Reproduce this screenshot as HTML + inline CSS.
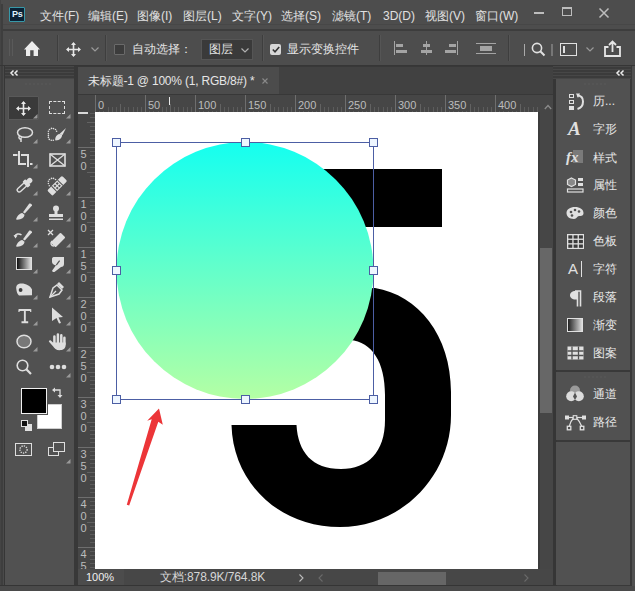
<!DOCTYPE html><html><head><meta charset="utf-8"><style>
*{margin:0;padding:0;box-sizing:border-box}
html,body{width:635px;height:591px;overflow:hidden;background:#3a3a3a;font-family:"Liberation Sans",sans-serif;color:#d8d8d8;font-size:12px}
div,svg,span{position:absolute}
.t{white-space:nowrap;line-height:14px;font-size:12px;color:#e3e3e3}
.ic{overflow:visible}
</style></head><body>
<div style="left:0;top:0;width:635px;height:591px;background:#3a3a3a"></div>
<div style="left:0;top:0;width:635px;height:30px;background:#4d4d4d"></div>
<div style="left:0;top:24px;width:635px;height:1px;background:#474747"></div>
<div style="left:0;top:29px;width:635px;height:2px;background:#3d3d3d"></div>
<div style="left:0;top:0;width:1px;height:591px;background:#444"></div>
<div style="left:1px;top:4px;width:2px;height:587px;background:#3e3e3e"></div>
<div style="left:9px;top:7px;width:16px;height:15px;background:#0b2135;border:1px solid #3898a8;border-radius:1px"></div>
<div class="t" style="left:12px;top:9px;font-size:9px;line-height:11px;color:#dff2ff;font-weight:bold;letter-spacing:-0.3px">Ps</div>
<div class="t" style="left:40px;top:9px;color:#e0e0e0">文件(F)</div>
<div class="t" style="left:88px;top:9px;color:#e0e0e0">编辑(E)</div>
<div class="t" style="left:137px;top:9px;color:#e0e0e0">图像(I)</div>
<div class="t" style="left:183px;top:9px;color:#e0e0e0">图层(L)</div>
<div class="t" style="left:232px;top:9px;color:#e0e0e0">文字(Y)</div>
<div class="t" style="left:281px;top:9px;color:#e0e0e0">选择(S)</div>
<div class="t" style="left:332px;top:9px;color:#e0e0e0">滤镜(T)</div>
<div class="t" style="left:383px;top:9px;color:#e0e0e0">3D(D)</div>
<div class="t" style="left:425px;top:9px;color:#e0e0e0">视图(V)</div>
<div class="t" style="left:475px;top:9px;color:#e0e0e0">窗口(W)</div>
<div style="left:534px;top:12px;width:10px;height:2px;background:#bdbdbd"></div>
<div style="left:562px;top:7px;width:10px;height:9px;border:1px solid #bdbdbd;border-top-width:2px"></div>
<svg class="ic" style="left:599px;top:8px" width="10" height="10"><path d="M0.5 0.5L9.5 9.5M9.5 0.5L0.5 9.5" stroke="#bdbdbd" stroke-width="1.5"/></svg>
<div style="left:3px;top:31px;width:632px;height:34px;background:#4d4d4d"></div>
<div style="left:0;top:65px;width:635px;height:1px;background:#363636"></div>
<div style="left:9px;top:39px;width:1px;height:17px;background:#5a5a5a"></div>
<div style="left:12px;top:39px;width:1px;height:17px;background:#5a5a5a"></div>
<svg class="ic" style="left:20px;top:36px" width="24" height="24"><path d="M12 5L4 13.5H6V20H10.2V14.2H13.6V20H18V13.5H20Z" fill="#ececec"/></svg>
<div style="left:57px;top:35px;width:1px;height:26px;background:#3e3e3e"></div>
<div style="left:58px;top:35px;width:1px;height:26px;background:#555"></div>
<div style="left:105px;top:35px;width:1px;height:26px;background:#3e3e3e"></div>
<div style="left:106px;top:35px;width:1px;height:26px;background:#555"></div>
<div style="left:262px;top:35px;width:1px;height:26px;background:#3e3e3e"></div>
<div style="left:263px;top:35px;width:1px;height:26px;background:#555"></div>
<div style="left:379px;top:35px;width:1px;height:26px;background:#3e3e3e"></div>
<div style="left:380px;top:35px;width:1px;height:26px;background:#555"></div>
<div style="left:508px;top:35px;width:1px;height:26px;background:#3e3e3e"></div>
<div style="left:509px;top:35px;width:1px;height:26px;background:#555"></div>
<svg class="ic" style="left:66px;top:42px" width="15" height="15" viewBox="0 0 15 15"><path d="M7.5 1V14M1 7.5H14" stroke="#e6e6e6" stroke-width="1.6"/><path d="M7.5 0L10 3H5ZM7.5 15L10 12H5ZM0 7.5L3 5V10ZM15 7.5L12 5V10Z" fill="#e6e6e6"/></svg>
<svg class="ic" style="left:91px;top:47px" width="8" height="5"><path d="M0.5 0.5L4 4L7.5 0.5" stroke="#9a9a9a" fill="none" stroke-width="1.2"/></svg>
<div style="left:114px;top:44px;width:11px;height:11px;border:1px solid #6a6a6a;background:#3c3c3c;border-radius:1px"></div>
<div class="t" style="left:132px;top:42px">自动选择：</div>
<div style="left:201px;top:39px;width:52px;height:21px;background:#3a3a3a;border:1px solid #555"></div>
<div class="t" style="left:209px;top:42px">图层</div>
<svg class="ic" style="left:241px;top:48px" width="8" height="5"><path d="M0.5 0.5L4 4L7.5 0.5" stroke="#b0b0b0" fill="none" stroke-width="1.2"/></svg>
<div style="left:270px;top:44px;width:11px;height:11px;background:#d6d6d6;border-radius:2px"></div>
<svg class="ic" style="left:272px;top:46px" width="8" height="7"><path d="M0.8 3.5L3 5.8L7.2 1" stroke="#333" fill="none" stroke-width="1.6"/></svg>
<div class="t" style="left:287px;top:42px">显示变换控件</div>
<div style="left:394px;top:41px;width:1px;height:14px;background:#a4a4a4"></div><div style="left:396px;top:44px;width:7px;height:3px;background:#a4a4a4"></div><div style="left:396px;top:50px;width:11px;height:3px;background:#a4a4a4"></div>
<div style="left:426px;top:41px;width:1px;height:14px;background:#a4a4a4"></div><div style="left:423px;top:44px;width:7px;height:3px;background:#a4a4a4"></div><div style="left:421px;top:50px;width:11px;height:3px;background:#a4a4a4"></div>
<div style="left:457px;top:41px;width:1px;height:14px;background:#a4a4a4"></div><div style="left:449px;top:44px;width:7px;height:3px;background:#a4a4a4"></div><div style="left:445px;top:50px;width:11px;height:3px;background:#a4a4a4"></div>
<div style="left:476px;top:43px;width:20px;height:1px;background:#a4a4a4"></div><div style="left:476px;top:53px;width:20px;height:1px;background:#a4a4a4"></div><div style="left:480px;top:46px;width:12px;height:5px;background:#a4a4a4"></div>
<div style="left:524px;top:44px;width:1px;height:12px;background:#aaa"></div>
<svg class="ic" style="left:531px;top:42px" width="15" height="15"><circle cx="6" cy="6" r="4.6" stroke="#e0e0e0" stroke-width="1.6" fill="none"/><path d="M9.3 9.3L13.5 13.5" stroke="#e0e0e0" stroke-width="2"/></svg>
<div style="left:551px;top:44px;width:2px;height:12px;background:#777"></div>
<div style="left:560px;top:43px;width:17px;height:13px;border:1.5px solid #e0e0e0"></div>
<div style="left:563px;top:46px;width:2px;height:7px;background:#e0e0e0"></div>
<svg class="ic" style="left:586px;top:47px" width="8" height="5"><path d="M0.5 0.5L4 4L7.5 0.5" stroke="#9a9a9a" fill="none" stroke-width="1.2"/></svg>
<svg class="ic" style="left:604px;top:40px" width="17" height="17"><path d="M4.5 7H1V16H16V7H12.5" stroke="#e6e6e6" stroke-width="1.8" fill="none"/><path d="M8.5 12V2M5 5L8.5 1.5L12 5" stroke="#e6e6e6" stroke-width="1.8" fill="none"/></svg>
<div style="left:3px;top:66px;width:1px;height:520px;background:#4a4a4a"></div>
<div style="left:4px;top:66px;width:1px;height:520px;background:#363636"></div>
<div style="left:5px;top:66px;width:69px;height:520px;background:#515151"></div>
<div style="left:5px;top:66px;width:69px;height:13px;background:#3b3b3b"></div>
<div style="left:5px;top:66px;width:69px;height:1px;background:#474747"></div>
<div style="left:5px;top:69px;width:69px;height:1px;background:#474747"></div>
<div style="left:5px;top:72px;width:69px;height:1px;background:#474747"></div>
<div style="left:5px;top:75px;width:69px;height:1px;background:#474747"></div>
<div style="left:5px;top:78px;width:69px;height:1px;background:#474747"></div>
<svg class="ic" style="left:10px;top:70px" width="9" height="6"><path d="M3.5 0.5L1 3L3.5 5.5M7.5 0.5L5 3L7.5 5.5" stroke="#eeeeee" stroke-width="1.5" fill="none"/></svg>
<div style="left:25px;top:83px;width:28px;height:2px;background:repeating-linear-gradient(90deg,#555 0 2px,transparent 2px 4px)"></div>
<div style="left:8px;top:96px;width:31px;height:24px;background:#3a3a3a;border:1px solid #595959;border-radius:1px"></div>
<svg class="ic" style="left:16px;top:101px" width="15" height="15" viewBox="0 0 15 15"><path d="M7.5 1V14M1 7.5H14" stroke="#e8e8e8" stroke-width="1.6"/><path d="M7.5 0L10 3H5ZM7.5 15L10 12H5ZM0 7.5L3 5V10ZM15 7.5L12 5V10Z" fill="#e8e8e8"/></svg>
<svg class="ic" style="left:33px;top:114px" width="5" height="5"><path d="M4.5 0V4.5H0Z" fill="#9a9a9a"/></svg>
<div style="left:49px;top:101px;width:16px;height:13px;border:1.5px dashed #dedede"></div>
<svg class="ic" style="left:66px;top:114px" width="5" height="5"><path d="M4.5 0V4.5H0Z" fill="#9a9a9a"/></svg>
<svg class="ic" style="left:16px;top:127px" width="18" height="16"><ellipse cx="9" cy="5.5" rx="7.5" ry="4.8" stroke="#dedede" stroke-width="1.5" fill="none"/><path d="M3.5 9C2 11 4 13 5 11.5L5 15" stroke="#dedede" stroke-width="1.5" fill="none"/></svg>
<svg class="ic" style="left:33px;top:139px" width="5" height="5"><path d="M4.5 0V4.5H0Z" fill="#9a9a9a"/></svg>
<svg class="ic" style="left:44px;top:122px" width="24" height="22"><circle cx="5.5" cy="7.5" r="0.8" fill="#dedede"/><circle cx="7.5" cy="6.4" r="0.8" fill="#dedede"/><circle cx="9.5" cy="6.6" r="0.8" fill="#dedede"/><circle cx="11.5" cy="7.5" r="0.8" fill="#dedede"/><circle cx="12.6" cy="9.3" r="0.8" fill="#dedede"/><circle cx="4.4" cy="9.3" r="0.8" fill="#dedede"/><circle cx="4.4" cy="11.5" r="0.8" fill="#dedede"/><circle cx="4.4" cy="13.4" r="0.8" fill="#dedede"/><circle cx="4.4" cy="15.4" r="0.8" fill="#dedede"/><circle cx="5.3" cy="17.4" r="0.8" fill="#dedede"/><circle cx="7.3" cy="18.3" r="0.8" fill="#dedede"/><circle cx="9.3" cy="18.3" r="0.8" fill="#dedede"/><path d="M11.5 18.5C10.5 17 12 13 15 12L18 12.5C18.5 15 16 18.5 11.5 18.5Z" fill="#dedede"/><path d="M15.5 12L22 6L18.5 13Z" fill="#dedede"/></svg>
<svg class="ic" style="left:66px;top:139px" width="5" height="5"><path d="M4.5 0V4.5H0Z" fill="#9a9a9a"/></svg>
<svg class="ic" style="left:12px;top:150px" width="22" height="18"><path d="M1 5H5.5M7 1V14H14M9 5H16V17M18 14H20.5" stroke="#dedede" stroke-width="2" fill="none"/></svg>
<svg class="ic" style="left:33px;top:164px" width="5" height="5"><path d="M4.5 0V4.5H0Z" fill="#9a9a9a"/></svg>
<svg class="ic" style="left:49px;top:153px" width="17" height="14"><rect x="1" y="1" width="15" height="12" stroke="#dedede" stroke-width="1.6" fill="none"/><path d="M1 1L16 13M16 1L1 13" stroke="#dedede" stroke-width="1.3"/></svg>
<svg class="ic" style="left:12px;top:174px" width="22" height="22"><g transform="translate(5.2 17.8) rotate(-42)"><rect x="0.7" y="-2" width="11" height="4" rx="2" stroke="#dedede" stroke-width="1.4" fill="none"/><rect x="10.5" y="-4" width="4" height="8" rx="1" fill="#dedede"/><rect x="13" y="-2.6" width="6.5" height="5.2" rx="2.6" fill="#dedede"/></g></svg>
<svg class="ic" style="left:33px;top:191px" width="5" height="5"><path d="M4.5 0V4.5H0Z" fill="#9a9a9a"/></svg>
<svg class="ic" style="left:44px;top:174px" width="24" height="24"><circle cx="5.5" cy="5.5" r="0.8" fill="#dedede"/><circle cx="7.5" cy="4.4" r="0.8" fill="#dedede"/><circle cx="9.5" cy="4.4" r="0.8" fill="#dedede"/><circle cx="11.5" cy="5.5" r="0.8" fill="#dedede"/><circle cx="4.4" cy="7.3" r="0.8" fill="#dedede"/><circle cx="4.4" cy="9.5" r="0.8" fill="#dedede"/><circle cx="5.3" cy="11.7" r="0.8" fill="#dedede"/><g transform="translate(13.2 11.8) rotate(-45)"><rect x="-10.5" y="-3.8" width="21" height="7.6" rx="1.5" fill="#dedede"/><path d="M-4.3 -3.8V3.8M4.3 -3.8V3.8" stroke="#515151" stroke-width="1"/><rect x="-2.6" y="-2.6" width="2" height="2" fill="#515151"/><rect x="0.6" y="-2.6" width="2" height="2" fill="#515151"/><rect x="-2.6" y="0.6" width="2" height="2" fill="#515151"/><rect x="0.6" y="0.6" width="2" height="2" fill="#515151"/></g></svg>
<svg class="ic" style="left:66px;top:191px" width="5" height="5"><path d="M4.5 0V4.5H0Z" fill="#9a9a9a"/></svg>
<svg class="ic" style="left:12px;top:200px" width="22" height="22"><path d="M17.3 3.6C18.5 2.8 20.5 4.5 20 5.6L12.8 13.6L11 12.3Z" fill="#dedede"/><path d="M4 19.6C4.8 17 6.5 13.6 10.3 13L12.5 14.8C12.3 18 9 20 4 19.6Z" fill="#dedede"/></svg>
<svg class="ic" style="left:33px;top:217px" width="5" height="5"><path d="M4.5 0V4.5H0Z" fill="#9a9a9a"/></svg>
<svg class="ic" style="left:48px;top:205px" width="16" height="16"><circle cx="8" cy="3.5" r="3" fill="#dedede"/><rect x="6.5" y="5" width="3" height="4" fill="#dedede"/><rect x="1" y="9" width="14" height="3" fill="#dedede"/><rect x="1" y="13.5" width="14" height="1.5" fill="#dedede"/></svg>
<svg class="ic" style="left:66px;top:217px" width="5" height="5"><path d="M4.5 0V4.5H0Z" fill="#9a9a9a"/></svg>
<svg class="ic" style="left:12px;top:227px" width="22" height="22"><path d="M17.3 3.6C18.5 2.8 20.5 4.5 20 5.6L12.8 13.6L11 12.3Z" fill="#dedede"/><path d="M4 19.6C4.8 17 6.5 13.6 10.3 13L12.5 14.8C12.3 18 9 20 4 19.6Z" fill="#dedede"/><path d="M3 9.5C3.5 7 7 6 9.5 8" stroke="#dedede" stroke-width="1.5" fill="none"/><path d="M1.5 8L3.5 11.5L5.5 8.5Z" fill="#dedede"/></svg>
<svg class="ic" style="left:33px;top:243px" width="5" height="5"><path d="M4.5 0V4.5H0Z" fill="#9a9a9a"/></svg>
<svg class="ic" style="left:47px;top:229px" width="19" height="18"><path d="M1 1L6 6M6 1L1 6" stroke="#dedede" stroke-width="1.3"/><g transform="rotate(-45 11 11)"><rect x="4" y="7.5" width="14" height="7" rx="1" fill="#dedede"/></g><path d="M5 12C3 14 4 17 7 17" stroke="#dedede" stroke-width="1.4" fill="none"/></svg>
<svg class="ic" style="left:66px;top:243px" width="5" height="5"><path d="M4.5 0V4.5H0Z" fill="#9a9a9a"/></svg>
<div style="left:16px;top:257px;width:16px;height:13px;border:1.3px solid #e0e0e0;background:linear-gradient(90deg,#111,#ddd)"></div>
<svg class="ic" style="left:33px;top:269px" width="5" height="5"><path d="M4.5 0V4.5H0Z" fill="#9a9a9a"/></svg>
<svg class="ic" style="left:44px;top:252px" width="22" height="22"><path d="M8 7C8 5.5 9 5 10.5 5H20V12C20 13.8 18.8 15 17 15L10.8 19.8C9.8 20.6 7.6 19.8 8.2 18.6L12 13.2C10 13.2 8 12 8 10Z" fill="#dedede"/><path d="M12.3 13.2L15.6 8.6" stroke="#515151" stroke-width="1.2"/></svg>
<svg class="ic" style="left:66px;top:269px" width="5" height="5"><path d="M4.5 0V4.5H0Z" fill="#9a9a9a"/></svg>
<svg class="ic" style="left:12px;top:278px" width="22" height="22"><path d="M4.3 11C3.8 7.3 6 5.6 9.5 5.6C14 5.6 18.5 8 20 11.5L20 17.2L7 17.6C5.3 16 4.5 13.5 4.3 11Z" fill="#dedede"/><circle cx="8.6" cy="12" r="1.9" fill="#3a3a3a"/></svg>
<svg class="ic" style="left:33px;top:295px" width="5" height="5"><path d="M4.5 0V4.5H0Z" fill="#9a9a9a"/></svg>
<svg class="ic" style="left:48px;top:281px" width="17" height="17"><path d="M11 1L16 6L14 8L9 3Z" fill="#dedede"/><path d="M9 4L14 9L11 13L2 16L5 7Z" stroke="#dedede" stroke-width="1.5" fill="none"/><path d="M2 16L8 10" stroke="#dedede" stroke-width="1.2"/></svg>
<svg class="ic" style="left:66px;top:295px" width="5" height="5"><path d="M4.5 0V4.5H0Z" fill="#9a9a9a"/></svg>
<svg class="ic" style="left:18px;top:308px" width="14" height="16"><path d="M1 2H12.7M6.85 2V14M3.5 14.2H10.2" stroke="#dedede" stroke-width="1.9"/><path d="M1 1.2V4M12.7 1.2V4" stroke="#dedede" stroke-width="1.2"/></svg>
<svg class="ic" style="left:33px;top:321px" width="5" height="5"><path d="M4.5 0V4.5H0Z" fill="#9a9a9a"/></svg>
<svg class="ic" style="left:51px;top:307px" width="13" height="17"><path d="M1 0.5L12 10L7.5 10.5L10 16L8 16.5L5.5 11L1 14Z" fill="#dedede"/></svg>
<svg class="ic" style="left:66px;top:321px" width="5" height="5"><path d="M4.5 0V4.5H0Z" fill="#9a9a9a"/></svg>
<svg class="ic" style="left:16px;top:334px" width="16" height="15"><ellipse cx="8" cy="7.5" rx="7" ry="6.3" stroke="#dedede" stroke-width="1.5" fill="#787878"/></svg>
<svg class="ic" style="left:33px;top:347px" width="5" height="5"><path d="M4.5 0V4.5H0Z" fill="#9a9a9a"/></svg>
<svg class="ic" style="left:48px;top:332px" width="19" height="19"><path d="M6.4 11V4.6M9.9 11V2.6M13.3 11V3.2M16.4 12V5.8" stroke="#dedede" stroke-width="2.5" stroke-linecap="round"/><path d="M5 10.5H17.65V13C17.65 16.5 15 18.2 11.5 18.2C8 18.2 6.5 16.5 5 14.2L1 9.8C0.5 8.8 1.8 7.6 2.8 8.4L5 10.5Z" fill="#dedede"/></svg>
<svg class="ic" style="left:66px;top:347px" width="5" height="5"><path d="M4.5 0V4.5H0Z" fill="#9a9a9a"/></svg>
<svg class="ic" style="left:16px;top:359px" width="16" height="16"><circle cx="6.5" cy="6.5" r="5.3" stroke="#dedede" stroke-width="1.6" fill="none"/><path d="M10.3 10.3L15 15" stroke="#dedede" stroke-width="2.2"/></svg>
<svg class="ic" style="left:49px;top:364px" width="18" height="6"><circle cx="3" cy="3" r="2.3" fill="#dedede"/><circle cx="9" cy="3" r="2.3" fill="#dedede"/><circle cx="15" cy="3" r="2.3" fill="#dedede"/></svg>
<svg class="ic" style="left:66px;top:373px" width="5" height="5"><path d="M4.5 0V4.5H0Z" fill="#9a9a9a"/></svg>
<div style="left:37px;top:404px;width:25px;height:25px;background:#fff;border:1px solid #cfcfcf"></div>
<div style="left:21px;top:388px;width:26px;height:26px;background:#000;border:1.5px solid #f0f0f0;box-shadow:0 0 0 1px #515151"></div>
<svg class="ic" style="left:52px;top:387px" width="12" height="12"><path d="M2 3H8V8" stroke="#dedede" stroke-width="1.3" fill="none"/><path d="M0 3L3 0.5V5.5Z M8 11L5.5 8H10.5Z" fill="#dedede"/></svg>
<div style="left:25px;top:424px;width:7px;height:7px;background:#e0e0e0"></div>
<div style="left:21px;top:420px;width:7px;height:7px;background:#111;border:1px solid #e0e0e0"></div>
<div style="left:15px;top:443px;width:17px;height:13px;border:1.5px solid #dedede"></div>
<svg class="ic" style="left:17px;top:444px" width="13" height="11"><circle cx="6.5" cy="5.5" r="3.6" stroke="#dedede" stroke-width="1.4" stroke-dasharray="1.3 1.1" fill="none"/></svg>
<div style="left:48px;top:447px;width:11px;height:9px;border:1.3px solid #dedede"></div>
<div style="left:53px;top:442px;width:12px;height:10px;border:1.3px solid #dedede;background:#515151"></div>
<svg class="ic" style="left:66px;top:459px" width="5" height="5"><path d="M4.5 0V4.5H0Z" fill="#9a9a9a"/></svg>
<div style="left:74px;top:66px;width:4px;height:525px;background:#383838"></div>
<div style="left:78px;top:66px;width:475px;height:520px;background:#3e3e3e"></div>
<div style="left:78px;top:66px;width:475px;height:29px;background:#414141"></div>
<div style="left:78px;top:66px;width:475px;height:1px;background:#383838"></div>
<div style="left:78px;top:94px;width:475px;height:1px;background:#383838"></div>
<div style="left:78px;top:67px;width:201px;height:27px;background:#4c4c4c"></div>
<div class="t" style="left:88px;top:74px;color:#e6e6e6;letter-spacing:-0.2px">未标题-1 @ 100% (1, RGB/8#) *</div>
<svg class="ic" style="left:262px;top:78px" width="6" height="6"><path d="M0.5 0.5L5.5 5.5M5.5 0.5L0.5 5.5" stroke="#8a8a8a" stroke-width="1.1"/></svg>
<div style="left:78px;top:95px;width:460px;height:17px;background:#464646"></div>
<div style="left:95px;top:95px;width:1px;height:17px;background:#6e6e6e"></div><div style="left:99px;top:107px;width:1px;height:5px;background:#5c5c5c"></div><div style="left:103px;top:107px;width:1px;height:5px;background:#5c5c5c"></div><div style="left:108px;top:107px;width:1px;height:5px;background:#5c5c5c"></div><div style="left:112px;top:107px;width:1px;height:5px;background:#5c5c5c"></div><div style="left:116px;top:107px;width:1px;height:5px;background:#5c5c5c"></div><div style="left:120px;top:104px;width:1px;height:8px;background:#626262"></div><div style="left:124px;top:107px;width:1px;height:5px;background:#5c5c5c"></div><div style="left:128px;top:107px;width:1px;height:5px;background:#5c5c5c"></div><div style="left:133px;top:107px;width:1px;height:5px;background:#5c5c5c"></div><div style="left:137px;top:107px;width:1px;height:5px;background:#5c5c5c"></div><div style="left:141px;top:107px;width:1px;height:5px;background:#5c5c5c"></div><div style="left:145px;top:95px;width:1px;height:17px;background:#6e6e6e"></div><div style="left:149px;top:107px;width:1px;height:5px;background:#5c5c5c"></div><div style="left:153px;top:107px;width:1px;height:5px;background:#5c5c5c"></div><div style="left:158px;top:107px;width:1px;height:5px;background:#5c5c5c"></div><div style="left:162px;top:107px;width:1px;height:5px;background:#5c5c5c"></div><div style="left:166px;top:107px;width:1px;height:5px;background:#5c5c5c"></div><div style="left:170px;top:104px;width:1px;height:8px;background:#626262"></div><div style="left:174px;top:107px;width:1px;height:5px;background:#5c5c5c"></div><div style="left:178px;top:107px;width:1px;height:5px;background:#5c5c5c"></div><div style="left:183px;top:107px;width:1px;height:5px;background:#5c5c5c"></div><div style="left:187px;top:107px;width:1px;height:5px;background:#5c5c5c"></div><div style="left:191px;top:107px;width:1px;height:5px;background:#5c5c5c"></div><div style="left:195px;top:95px;width:1px;height:17px;background:#6e6e6e"></div><div style="left:199px;top:107px;width:1px;height:5px;background:#5c5c5c"></div><div style="left:203px;top:107px;width:1px;height:5px;background:#5c5c5c"></div><div style="left:208px;top:107px;width:1px;height:5px;background:#5c5c5c"></div><div style="left:212px;top:107px;width:1px;height:5px;background:#5c5c5c"></div><div style="left:216px;top:107px;width:1px;height:5px;background:#5c5c5c"></div><div style="left:220px;top:104px;width:1px;height:8px;background:#626262"></div><div style="left:224px;top:107px;width:1px;height:5px;background:#5c5c5c"></div><div style="left:228px;top:107px;width:1px;height:5px;background:#5c5c5c"></div><div style="left:233px;top:107px;width:1px;height:5px;background:#5c5c5c"></div><div style="left:237px;top:107px;width:1px;height:5px;background:#5c5c5c"></div><div style="left:241px;top:107px;width:1px;height:5px;background:#5c5c5c"></div><div style="left:245px;top:95px;width:1px;height:17px;background:#6e6e6e"></div><div style="left:249px;top:107px;width:1px;height:5px;background:#5c5c5c"></div><div style="left:253px;top:107px;width:1px;height:5px;background:#5c5c5c"></div><div style="left:258px;top:107px;width:1px;height:5px;background:#5c5c5c"></div><div style="left:262px;top:107px;width:1px;height:5px;background:#5c5c5c"></div><div style="left:266px;top:107px;width:1px;height:5px;background:#5c5c5c"></div><div style="left:270px;top:104px;width:1px;height:8px;background:#626262"></div><div style="left:274px;top:107px;width:1px;height:5px;background:#5c5c5c"></div><div style="left:278px;top:107px;width:1px;height:5px;background:#5c5c5c"></div><div style="left:283px;top:107px;width:1px;height:5px;background:#5c5c5c"></div><div style="left:287px;top:107px;width:1px;height:5px;background:#5c5c5c"></div><div style="left:291px;top:107px;width:1px;height:5px;background:#5c5c5c"></div><div style="left:295px;top:95px;width:1px;height:17px;background:#6e6e6e"></div><div style="left:299px;top:107px;width:1px;height:5px;background:#5c5c5c"></div><div style="left:303px;top:107px;width:1px;height:5px;background:#5c5c5c"></div><div style="left:308px;top:107px;width:1px;height:5px;background:#5c5c5c"></div><div style="left:312px;top:107px;width:1px;height:5px;background:#5c5c5c"></div><div style="left:316px;top:107px;width:1px;height:5px;background:#5c5c5c"></div><div style="left:320px;top:104px;width:1px;height:8px;background:#626262"></div><div style="left:324px;top:107px;width:1px;height:5px;background:#5c5c5c"></div><div style="left:328px;top:107px;width:1px;height:5px;background:#5c5c5c"></div><div style="left:333px;top:107px;width:1px;height:5px;background:#5c5c5c"></div><div style="left:337px;top:107px;width:1px;height:5px;background:#5c5c5c"></div><div style="left:341px;top:107px;width:1px;height:5px;background:#5c5c5c"></div><div style="left:345px;top:95px;width:1px;height:17px;background:#6e6e6e"></div><div style="left:349px;top:107px;width:1px;height:5px;background:#5c5c5c"></div><div style="left:353px;top:107px;width:1px;height:5px;background:#5c5c5c"></div><div style="left:358px;top:107px;width:1px;height:5px;background:#5c5c5c"></div><div style="left:362px;top:107px;width:1px;height:5px;background:#5c5c5c"></div><div style="left:366px;top:107px;width:1px;height:5px;background:#5c5c5c"></div><div style="left:370px;top:104px;width:1px;height:8px;background:#626262"></div><div style="left:374px;top:107px;width:1px;height:5px;background:#5c5c5c"></div><div style="left:378px;top:107px;width:1px;height:5px;background:#5c5c5c"></div><div style="left:383px;top:107px;width:1px;height:5px;background:#5c5c5c"></div><div style="left:387px;top:107px;width:1px;height:5px;background:#5c5c5c"></div><div style="left:391px;top:107px;width:1px;height:5px;background:#5c5c5c"></div><div style="left:395px;top:95px;width:1px;height:17px;background:#6e6e6e"></div><div style="left:399px;top:107px;width:1px;height:5px;background:#5c5c5c"></div><div style="left:403px;top:107px;width:1px;height:5px;background:#5c5c5c"></div><div style="left:408px;top:107px;width:1px;height:5px;background:#5c5c5c"></div><div style="left:412px;top:107px;width:1px;height:5px;background:#5c5c5c"></div><div style="left:416px;top:107px;width:1px;height:5px;background:#5c5c5c"></div><div style="left:420px;top:104px;width:1px;height:8px;background:#626262"></div><div style="left:424px;top:107px;width:1px;height:5px;background:#5c5c5c"></div><div style="left:428px;top:107px;width:1px;height:5px;background:#5c5c5c"></div><div style="left:433px;top:107px;width:1px;height:5px;background:#5c5c5c"></div><div style="left:437px;top:107px;width:1px;height:5px;background:#5c5c5c"></div><div style="left:441px;top:107px;width:1px;height:5px;background:#5c5c5c"></div><div style="left:445px;top:95px;width:1px;height:17px;background:#6e6e6e"></div><div style="left:449px;top:107px;width:1px;height:5px;background:#5c5c5c"></div><div style="left:453px;top:107px;width:1px;height:5px;background:#5c5c5c"></div><div style="left:458px;top:107px;width:1px;height:5px;background:#5c5c5c"></div><div style="left:462px;top:107px;width:1px;height:5px;background:#5c5c5c"></div><div style="left:466px;top:107px;width:1px;height:5px;background:#5c5c5c"></div><div style="left:470px;top:104px;width:1px;height:8px;background:#626262"></div><div style="left:474px;top:107px;width:1px;height:5px;background:#5c5c5c"></div><div style="left:478px;top:107px;width:1px;height:5px;background:#5c5c5c"></div><div style="left:483px;top:107px;width:1px;height:5px;background:#5c5c5c"></div><div style="left:487px;top:107px;width:1px;height:5px;background:#5c5c5c"></div><div style="left:491px;top:107px;width:1px;height:5px;background:#5c5c5c"></div><div style="left:495px;top:95px;width:1px;height:17px;background:#6e6e6e"></div><div style="left:499px;top:107px;width:1px;height:5px;background:#5c5c5c"></div><div style="left:503px;top:107px;width:1px;height:5px;background:#5c5c5c"></div><div style="left:508px;top:107px;width:1px;height:5px;background:#5c5c5c"></div><div style="left:512px;top:107px;width:1px;height:5px;background:#5c5c5c"></div><div style="left:516px;top:107px;width:1px;height:5px;background:#5c5c5c"></div><div style="left:520px;top:104px;width:1px;height:8px;background:#626262"></div><div style="left:524px;top:107px;width:1px;height:5px;background:#5c5c5c"></div><div style="left:528px;top:107px;width:1px;height:5px;background:#5c5c5c"></div><div style="left:533px;top:107px;width:1px;height:5px;background:#5c5c5c"></div><div style="left:537px;top:107px;width:1px;height:5px;background:#5c5c5c"></div>
<div class="t" style="left:97px;top:100px;font-size:11px;line-height:11px;padding:0 1px;background:#464646;color:#bcbcbc">0</div>
<div class="t" style="left:147px;top:100px;font-size:11px;line-height:11px;padding:0 1px;background:#464646;color:#bcbcbc">50</div>
<div class="t" style="left:197px;top:100px;font-size:11px;line-height:11px;padding:0 1px;background:#464646;color:#bcbcbc">100</div>
<div class="t" style="left:247px;top:100px;font-size:11px;line-height:11px;padding:0 1px;background:#464646;color:#bcbcbc">150</div>
<div class="t" style="left:297px;top:100px;font-size:11px;line-height:11px;padding:0 1px;background:#464646;color:#bcbcbc">200</div>
<div class="t" style="left:347px;top:100px;font-size:11px;line-height:11px;padding:0 1px;background:#464646;color:#bcbcbc">250</div>
<div class="t" style="left:397px;top:100px;font-size:11px;line-height:11px;padding:0 1px;background:#464646;color:#bcbcbc">300</div>
<div class="t" style="left:447px;top:100px;font-size:11px;line-height:11px;padding:0 1px;background:#464646;color:#bcbcbc">350</div>
<div class="t" style="left:497px;top:100px;font-size:11px;line-height:11px;padding:0 1px;background:#464646;color:#bcbcbc">400</div>
<svg class="ic" style="left:540px;top:99px" width="9" height="6"><path d="M0.5 5L4.5 1L8.5 5" stroke="#8a8a8a" fill="none" stroke-width="1.2"/></svg>
<div style="left:78px;top:112px;width:17px;height:457px;background:#464646"></div>
<div style="left:90px;top:113px;width:5px;height:1px;background:#5c5c5c"></div><div style="left:90px;top:117px;width:5px;height:1px;background:#5c5c5c"></div><div style="left:87px;top:122px;width:8px;height:1px;background:#626262"></div><div style="left:90px;top:126px;width:5px;height:1px;background:#5c5c5c"></div><div style="left:90px;top:130px;width:5px;height:1px;background:#5c5c5c"></div><div style="left:90px;top:134px;width:5px;height:1px;background:#5c5c5c"></div><div style="left:90px;top:138px;width:5px;height:1px;background:#5c5c5c"></div><div style="left:90px;top:142px;width:5px;height:1px;background:#5c5c5c"></div><div style="left:78px;top:147px;width:17px;height:1px;background:#6e6e6e"></div><div style="left:90px;top:151px;width:5px;height:1px;background:#5c5c5c"></div><div style="left:90px;top:155px;width:5px;height:1px;background:#5c5c5c"></div><div style="left:90px;top:159px;width:5px;height:1px;background:#5c5c5c"></div><div style="left:90px;top:163px;width:5px;height:1px;background:#5c5c5c"></div><div style="left:90px;top:167px;width:5px;height:1px;background:#5c5c5c"></div><div style="left:87px;top:172px;width:8px;height:1px;background:#626262"></div><div style="left:90px;top:176px;width:5px;height:1px;background:#5c5c5c"></div><div style="left:90px;top:180px;width:5px;height:1px;background:#5c5c5c"></div><div style="left:90px;top:184px;width:5px;height:1px;background:#5c5c5c"></div><div style="left:90px;top:188px;width:5px;height:1px;background:#5c5c5c"></div><div style="left:90px;top:192px;width:5px;height:1px;background:#5c5c5c"></div><div style="left:78px;top:197px;width:17px;height:1px;background:#6e6e6e"></div><div style="left:90px;top:201px;width:5px;height:1px;background:#5c5c5c"></div><div style="left:90px;top:205px;width:5px;height:1px;background:#5c5c5c"></div><div style="left:90px;top:209px;width:5px;height:1px;background:#5c5c5c"></div><div style="left:90px;top:213px;width:5px;height:1px;background:#5c5c5c"></div><div style="left:90px;top:217px;width:5px;height:1px;background:#5c5c5c"></div><div style="left:87px;top:222px;width:8px;height:1px;background:#626262"></div><div style="left:90px;top:226px;width:5px;height:1px;background:#5c5c5c"></div><div style="left:90px;top:230px;width:5px;height:1px;background:#5c5c5c"></div><div style="left:90px;top:234px;width:5px;height:1px;background:#5c5c5c"></div><div style="left:90px;top:238px;width:5px;height:1px;background:#5c5c5c"></div><div style="left:90px;top:242px;width:5px;height:1px;background:#5c5c5c"></div><div style="left:78px;top:247px;width:17px;height:1px;background:#6e6e6e"></div><div style="left:90px;top:251px;width:5px;height:1px;background:#5c5c5c"></div><div style="left:90px;top:255px;width:5px;height:1px;background:#5c5c5c"></div><div style="left:90px;top:259px;width:5px;height:1px;background:#5c5c5c"></div><div style="left:90px;top:263px;width:5px;height:1px;background:#5c5c5c"></div><div style="left:90px;top:267px;width:5px;height:1px;background:#5c5c5c"></div><div style="left:87px;top:272px;width:8px;height:1px;background:#626262"></div><div style="left:90px;top:276px;width:5px;height:1px;background:#5c5c5c"></div><div style="left:90px;top:280px;width:5px;height:1px;background:#5c5c5c"></div><div style="left:90px;top:284px;width:5px;height:1px;background:#5c5c5c"></div><div style="left:90px;top:288px;width:5px;height:1px;background:#5c5c5c"></div><div style="left:90px;top:292px;width:5px;height:1px;background:#5c5c5c"></div><div style="left:78px;top:297px;width:17px;height:1px;background:#6e6e6e"></div><div style="left:90px;top:301px;width:5px;height:1px;background:#5c5c5c"></div><div style="left:90px;top:305px;width:5px;height:1px;background:#5c5c5c"></div><div style="left:90px;top:309px;width:5px;height:1px;background:#5c5c5c"></div><div style="left:90px;top:313px;width:5px;height:1px;background:#5c5c5c"></div><div style="left:90px;top:317px;width:5px;height:1px;background:#5c5c5c"></div><div style="left:87px;top:322px;width:8px;height:1px;background:#626262"></div><div style="left:90px;top:326px;width:5px;height:1px;background:#5c5c5c"></div><div style="left:90px;top:330px;width:5px;height:1px;background:#5c5c5c"></div><div style="left:90px;top:334px;width:5px;height:1px;background:#5c5c5c"></div><div style="left:90px;top:338px;width:5px;height:1px;background:#5c5c5c"></div><div style="left:90px;top:342px;width:5px;height:1px;background:#5c5c5c"></div><div style="left:78px;top:347px;width:17px;height:1px;background:#6e6e6e"></div><div style="left:90px;top:351px;width:5px;height:1px;background:#5c5c5c"></div><div style="left:90px;top:355px;width:5px;height:1px;background:#5c5c5c"></div><div style="left:90px;top:359px;width:5px;height:1px;background:#5c5c5c"></div><div style="left:90px;top:363px;width:5px;height:1px;background:#5c5c5c"></div><div style="left:90px;top:367px;width:5px;height:1px;background:#5c5c5c"></div><div style="left:87px;top:372px;width:8px;height:1px;background:#626262"></div><div style="left:90px;top:376px;width:5px;height:1px;background:#5c5c5c"></div><div style="left:90px;top:380px;width:5px;height:1px;background:#5c5c5c"></div><div style="left:90px;top:384px;width:5px;height:1px;background:#5c5c5c"></div><div style="left:90px;top:388px;width:5px;height:1px;background:#5c5c5c"></div><div style="left:90px;top:392px;width:5px;height:1px;background:#5c5c5c"></div><div style="left:78px;top:397px;width:17px;height:1px;background:#6e6e6e"></div><div style="left:90px;top:401px;width:5px;height:1px;background:#5c5c5c"></div><div style="left:90px;top:405px;width:5px;height:1px;background:#5c5c5c"></div><div style="left:90px;top:409px;width:5px;height:1px;background:#5c5c5c"></div><div style="left:90px;top:413px;width:5px;height:1px;background:#5c5c5c"></div><div style="left:90px;top:417px;width:5px;height:1px;background:#5c5c5c"></div><div style="left:87px;top:422px;width:8px;height:1px;background:#626262"></div><div style="left:90px;top:426px;width:5px;height:1px;background:#5c5c5c"></div><div style="left:90px;top:430px;width:5px;height:1px;background:#5c5c5c"></div><div style="left:90px;top:434px;width:5px;height:1px;background:#5c5c5c"></div><div style="left:90px;top:438px;width:5px;height:1px;background:#5c5c5c"></div><div style="left:90px;top:442px;width:5px;height:1px;background:#5c5c5c"></div><div style="left:78px;top:447px;width:17px;height:1px;background:#6e6e6e"></div><div style="left:90px;top:451px;width:5px;height:1px;background:#5c5c5c"></div><div style="left:90px;top:455px;width:5px;height:1px;background:#5c5c5c"></div><div style="left:90px;top:459px;width:5px;height:1px;background:#5c5c5c"></div><div style="left:90px;top:463px;width:5px;height:1px;background:#5c5c5c"></div><div style="left:90px;top:467px;width:5px;height:1px;background:#5c5c5c"></div><div style="left:87px;top:472px;width:8px;height:1px;background:#626262"></div><div style="left:90px;top:476px;width:5px;height:1px;background:#5c5c5c"></div><div style="left:90px;top:480px;width:5px;height:1px;background:#5c5c5c"></div><div style="left:90px;top:484px;width:5px;height:1px;background:#5c5c5c"></div><div style="left:90px;top:488px;width:5px;height:1px;background:#5c5c5c"></div><div style="left:90px;top:492px;width:5px;height:1px;background:#5c5c5c"></div><div style="left:78px;top:497px;width:17px;height:1px;background:#6e6e6e"></div><div style="left:90px;top:501px;width:5px;height:1px;background:#5c5c5c"></div><div style="left:90px;top:505px;width:5px;height:1px;background:#5c5c5c"></div><div style="left:90px;top:509px;width:5px;height:1px;background:#5c5c5c"></div><div style="left:90px;top:513px;width:5px;height:1px;background:#5c5c5c"></div><div style="left:90px;top:517px;width:5px;height:1px;background:#5c5c5c"></div><div style="left:87px;top:522px;width:8px;height:1px;background:#626262"></div><div style="left:90px;top:526px;width:5px;height:1px;background:#5c5c5c"></div><div style="left:90px;top:530px;width:5px;height:1px;background:#5c5c5c"></div><div style="left:90px;top:534px;width:5px;height:1px;background:#5c5c5c"></div><div style="left:90px;top:538px;width:5px;height:1px;background:#5c5c5c"></div><div style="left:90px;top:542px;width:5px;height:1px;background:#5c5c5c"></div><div style="left:78px;top:547px;width:17px;height:1px;background:#6e6e6e"></div><div style="left:90px;top:551px;width:5px;height:1px;background:#5c5c5c"></div><div style="left:90px;top:555px;width:5px;height:1px;background:#5c5c5c"></div><div style="left:90px;top:559px;width:5px;height:1px;background:#5c5c5c"></div><div style="left:90px;top:563px;width:5px;height:1px;background:#5c5c5c"></div><div style="left:90px;top:567px;width:5px;height:1px;background:#5c5c5c"></div>
<div class="t" style="left:79px;top:149px;font-size:11px;line-height:11px;width:9px;text-align:center;background:#464646;color:#bcbcbc">5</div>
<div class="t" style="left:79px;top:161px;font-size:11px;line-height:11px;width:9px;text-align:center;background:#464646;color:#bcbcbc">0</div>
<div class="t" style="left:79px;top:199px;font-size:11px;line-height:11px;width:9px;text-align:center;background:#464646;color:#bcbcbc">1</div>
<div class="t" style="left:79px;top:211px;font-size:11px;line-height:11px;width:9px;text-align:center;background:#464646;color:#bcbcbc">0</div>
<div class="t" style="left:79px;top:223px;font-size:11px;line-height:11px;width:9px;text-align:center;background:#464646;color:#bcbcbc">0</div>
<div class="t" style="left:79px;top:249px;font-size:11px;line-height:11px;width:9px;text-align:center;background:#464646;color:#bcbcbc">1</div>
<div class="t" style="left:79px;top:261px;font-size:11px;line-height:11px;width:9px;text-align:center;background:#464646;color:#bcbcbc">5</div>
<div class="t" style="left:79px;top:273px;font-size:11px;line-height:11px;width:9px;text-align:center;background:#464646;color:#bcbcbc">0</div>
<div class="t" style="left:79px;top:299px;font-size:11px;line-height:11px;width:9px;text-align:center;background:#464646;color:#bcbcbc">2</div>
<div class="t" style="left:79px;top:311px;font-size:11px;line-height:11px;width:9px;text-align:center;background:#464646;color:#bcbcbc">0</div>
<div class="t" style="left:79px;top:323px;font-size:11px;line-height:11px;width:9px;text-align:center;background:#464646;color:#bcbcbc">0</div>
<div class="t" style="left:79px;top:349px;font-size:11px;line-height:11px;width:9px;text-align:center;background:#464646;color:#bcbcbc">2</div>
<div class="t" style="left:79px;top:361px;font-size:11px;line-height:11px;width:9px;text-align:center;background:#464646;color:#bcbcbc">5</div>
<div class="t" style="left:79px;top:373px;font-size:11px;line-height:11px;width:9px;text-align:center;background:#464646;color:#bcbcbc">0</div>
<div class="t" style="left:79px;top:399px;font-size:11px;line-height:11px;width:9px;text-align:center;background:#464646;color:#bcbcbc">3</div>
<div class="t" style="left:79px;top:411px;font-size:11px;line-height:11px;width:9px;text-align:center;background:#464646;color:#bcbcbc">0</div>
<div class="t" style="left:79px;top:423px;font-size:11px;line-height:11px;width:9px;text-align:center;background:#464646;color:#bcbcbc">0</div>
<div class="t" style="left:79px;top:449px;font-size:11px;line-height:11px;width:9px;text-align:center;background:#464646;color:#bcbcbc">3</div>
<div class="t" style="left:79px;top:461px;font-size:11px;line-height:11px;width:9px;text-align:center;background:#464646;color:#bcbcbc">5</div>
<div class="t" style="left:79px;top:473px;font-size:11px;line-height:11px;width:9px;text-align:center;background:#464646;color:#bcbcbc">0</div>
<div class="t" style="left:79px;top:499px;font-size:11px;line-height:11px;width:9px;text-align:center;background:#464646;color:#bcbcbc">4</div>
<div class="t" style="left:79px;top:511px;font-size:11px;line-height:11px;width:9px;text-align:center;background:#464646;color:#bcbcbc">0</div>
<div class="t" style="left:79px;top:523px;font-size:11px;line-height:11px;width:9px;text-align:center;background:#464646;color:#bcbcbc">0</div>
<div class="t" style="left:79px;top:549px;font-size:11px;line-height:11px;width:9px;text-align:center;background:#464646;color:#bcbcbc">4</div>
<div class="t" style="left:79px;top:561px;font-size:11px;line-height:11px;width:9px;text-align:center;background:#464646;color:#bcbcbc">5</div>
<div style="left:169px;top:97px;width:1px;height:8px;background:#e8e8e8"></div>
<div style="left:78px;top:95px;width:17px;height:17px;background:#464646"></div>
<div style="left:78px;top:112px;width:10px;height:2px;background:#d8d8d8"></div>
<div style="left:95px;top:112px;width:443px;height:457px;background:#fff;overflow:hidden">
 <svg width="443" height="457" viewBox="95 112 443 457" style="left:0;top:0">
  <defs><linearGradient id="g" x1="0" y1="0" x2="0" y2="1">
   <stop offset="0" stop-color="#14fff0"/><stop offset="1" stop-color="#b4ffa4"/></linearGradient></defs>
  <path d="M320 169 H442 V227 H358 L355 292 C362 289 368 288 375 288 C418 295 451 335 451 392 L451 415 C451 477 401 527 340 527 C278 527 233 482 231.5 425 L296.5 425 C298 452 312 469 341 469 C368 469 385 452 385 420 L385 395 C385 362 372 342 350 340 L320 340 Z" fill="#000"/>
  <circle cx="245" cy="270.5" r="128.5" fill="url(#g)"/>
  <rect x="116.5" y="142.5" width="257" height="257" fill="none" stroke="#4c5ea4" stroke-width="1"/>
  <g fill="#eef6ff" stroke="#4c5ea4" stroke-width="1">
   <rect x="112.5" y="138.5" width="8" height="8"/>
   <rect x="241.5" y="138.5" width="8" height="8"/>
   <rect x="369.5" y="138.5" width="8" height="8"/>
   <rect x="112.5" y="266.5" width="8" height="8"/>
   <rect x="369.5" y="266.5" width="8" height="8"/>
   <rect x="112.5" y="395.5" width="8" height="8"/>
   <rect x="241.5" y="395.5" width="8" height="8"/>
   <rect x="369.5" y="395.5" width="8" height="8"/>
  </g>
  <path d="M159 408.5 L162.8 424.8 L158.3 421.8 L129.2 505.5 L126.8 504.8 L151.7 419.2 L147.2 420.8 Z" fill="#ec3538"/>
 </svg>
</div>
<div style="left:538px;top:112px;width:15px;height:457px;background:#464646"></div>
<div style="left:538px;top:112px;width:2px;height:457px;background:#3c3c3c"></div>
<div style="left:540px;top:248px;width:12px;height:165px;background:#676767"></div>
<div style="left:538px;top:95px;width:15px;height:17px;background:#464646"></div>
<svg class="ic" style="left:544px;top:104px" width="8" height="6"><path d="M0.8 5L4 1.5L7.2 5" stroke="#8a8a8a" fill="none" stroke-width="1.3"/></svg>
<div style="left:553px;top:66px;width:4px;height:520px;background:#363636"></div>
<div style="left:78px;top:569px;width:475px;height:16px;background:#474747"></div>
<div style="left:78px;top:569px;width:46px;height:16px;background:#4c4c4c"></div>
<div class="t" style="left:86px;top:570px;color:#f0f0f0;font-size:11px">100%</div>
<div class="t" style="left:160px;top:570px;color:#d6d6d6;font-size:12px;letter-spacing:-0.1px">文档:878.9K/764.8K</div>
<svg class="ic" style="left:299px;top:574px" width="5" height="8"><path d="M0.5 0.5L4 4L0.5 7.5" stroke="#bbb" fill="none" stroke-width="1.1"/></svg>
<svg class="ic" style="left:318px;top:574px" width="5" height="8"><path d="M4.5 0.5L1 4L4.5 7.5" stroke="#6a6a6a" fill="none" stroke-width="1.1"/></svg>
<div style="left:378px;top:572px;width:68px;height:13px;background:#666"></div>
<svg class="ic" style="left:524px;top:574px" width="5" height="8"><path d="M0.5 0.5L4 4L0.5 7.5" stroke="#6a6a6a" fill="none" stroke-width="1.1"/></svg>
<div style="left:0;top:585px;width:635px;height:1px;background:#353535"></div>
<div style="left:0;top:586px;width:635px;height:5px;background:#4a4a4a"></div>
<div style="left:557px;top:66px;width:78px;height:520px;background:#393939"></div>
<div style="left:632px;top:66px;width:3px;height:520px;background:#515151"></div>
<div style="left:553px;top:66px;width:78px;height:13px;background:#3b3b3b"></div>
<div style="left:553px;top:66px;width:78px;height:1px;background:#474747"></div>
<div style="left:553px;top:69px;width:78px;height:1px;background:#474747"></div>
<div style="left:553px;top:72px;width:78px;height:1px;background:#474747"></div>
<div style="left:553px;top:75px;width:78px;height:1px;background:#474747"></div>
<div style="left:553px;top:78px;width:78px;height:1px;background:#474747"></div>
<svg class="ic" style="left:616px;top:70px" width="9" height="6"><path d="M3.5 0.5L1 3L3.5 5.5M7.5 0.5L5 3L7.5 5.5" stroke="#eeeeee" stroke-width="1.5" fill="none"/></svg>
<div style="left:556px;top:79px;width:74px;height:291px;background:#515151"></div>
<div style="left:556px;top:372px;width:74px;height:68px;background:#515151"></div>
<div style="left:556px;top:442px;width:74px;height:143px;background:#515151"></div>
<div style="left:584px;top:83px;width:24px;height:2px;background:repeating-linear-gradient(90deg,#555 0 2px,transparent 2px 4px)"></div>
<div style="left:584px;top:376px;width:24px;height:2px;background:repeating-linear-gradient(90deg,#555 0 2px,transparent 2px 4px)"></div>
<div class="t" style="left:593px;top:94px;color:#e6e6e6">历...</div>
<div class="t" style="left:593px;top:122px;color:#e6e6e6">字形</div>
<div class="t" style="left:593px;top:151px;color:#e6e6e6">样式</div>
<div class="t" style="left:593px;top:178px;color:#e6e6e6">属性</div>
<div class="t" style="left:593px;top:206px;color:#e6e6e6">颜色</div>
<div class="t" style="left:593px;top:234px;color:#e6e6e6">色板</div>
<div class="t" style="left:593px;top:262px;color:#e6e6e6">字符</div>
<div class="t" style="left:593px;top:290px;color:#e6e6e6">段落</div>
<div class="t" style="left:593px;top:318px;color:#e6e6e6">渐变</div>
<div class="t" style="left:593px;top:346px;color:#e6e6e6">图案</div>
<div class="t" style="left:593px;top:387px;color:#e6e6e6">通道</div>
<div class="t" style="left:593px;top:415px;color:#e6e6e6">路径</div>
<div style="left:569px;top:94px;width:5px;height:4px;border:1px solid #e0e0e0"></div>
<div style="left:569px;top:100px;width:5px;height:4px;border:1px solid #e0e0e0"></div>
<div style="left:569px;top:106px;width:5px;height:4px;background:#e0e0e0"></div>
<svg class="ic" style="left:575px;top:92px" width="10" height="19"><path d="M2 3.5C6 3.5 8 6 8 9.5C8 13 6 16 2.5 17" stroke="#e0e0e0" stroke-width="2" fill="none"/><path d="M1 1.5L5 1.5L3 6Z" fill="#e0e0e0"/></svg>
<div class="t" style="left:568px;top:119px;font-family:'Liberation Serif',serif;font-style:italic;font-weight:bold;font-size:19px;line-height:19px;color:#e0e0e0">A</div>
<div style="left:573px;top:150px;width:10px;height:13px;background:#7a7a7a"></div>
<div class="t" style="left:566px;top:149px;font-family:'Liberation Serif',serif;font-style:italic;font-weight:bold;font-size:15px;line-height:16px;color:#e0e0e0">fx</div>
<svg class="ic" style="left:567px;top:177px" width="17" height="16"><path d="M4.5 1L8.5 3V7.5L4.5 9.5L0.5 7.5V3Z" stroke="#e0e0e0" stroke-width="1.2" fill="#888"/><rect x="11" y="1" width="5" height="3" fill="#e0e0e0"/><rect x="11" y="6" width="5" height="3" fill="#e0e0e0"/><rect x="0.5" y="12" width="15.5" height="3" stroke="#e0e0e0" fill="none" stroke-width="1.2"/></svg>
<svg class="ic" style="left:566px;top:206px" width="18" height="14"><path d="M9 1C14 1 17.5 3.5 17.5 7C17.5 10 15 10 13 10C11 10 11 13 8 13C3 13 0.5 10 0.5 7C0.5 3.5 4 1 9 1Z" fill="#e0e0e0"/><circle cx="5" cy="6" r="1.3" fill="#515151"/><circle cx="9" cy="4" r="1.3" fill="#515151"/><circle cx="13" cy="5.5" r="1.3" fill="#515151"/><circle cx="6" cy="9.5" r="1.3" fill="#515151"/></svg>
<svg class="ic" style="left:567px;top:234px" width="17" height="15"><rect x="0" y="0" width="17" height="15" fill="#e0e0e0"/><rect x="1.3" y="1.3" width="4" height="3.3" fill="#3a3a3a"/><rect x="1.3" y="5.9" width="4" height="3.3" fill="#3a3a3a"/><rect x="1.3" y="10.5" width="4" height="3.3" fill="#3a3a3a"/><rect x="6.6" y="1.3" width="4" height="3.3" fill="#3a3a3a"/><rect x="6.6" y="5.9" width="4" height="3.3" fill="#3a3a3a"/><rect x="6.6" y="10.5" width="4" height="3.3" fill="#3a3a3a"/><rect x="11.9" y="1.3" width="4" height="3.3" fill="#3a3a3a"/><rect x="11.9" y="5.9" width="4" height="3.3" fill="#3a3a3a"/><rect x="11.9" y="10.5" width="4" height="3.3" fill="#3a3a3a"/></svg>
<div class="t" style="left:568px;top:261px;font-size:15px;line-height:16px;color:#e0e0e0">A</div>
<div style="left:581px;top:261px;width:1px;height:16px;background:#e0e0e0"></div>
<svg class="ic" style="left:568px;top:290px" width="14" height="17"><path d="M7 1H12.5V16.5M9.5 1V16.5" stroke="#e0e0e0" stroke-width="1.6" fill="none"/><path d="M7.5 1C4 1 2 3 2 5.2C2 7.5 4 9.5 7.5 9.5H9.5V1Z" fill="#e0e0e0"/></svg>
<div style="left:567px;top:318px;width:16px;height:14px;border:1.2px solid #e0e0e0;background:linear-gradient(90deg,#222,#ddd)"></div>
<svg class="ic" style="left:567px;top:346px" width="17" height="14"><rect x="0.5" y="0.5" width="16" height="13" fill="#e0e0e0"/><path d="M0.5 5H16.5M0.5 9.5H16.5M5 0.5V13.5M11.5 0.5V13.5" stroke="#515151" stroke-width="1.3"/></svg>
<svg class="ic" style="left:566px;top:385px" width="18" height="17"><circle cx="9" cy="5.5" r="5" fill="#9a9a9a"/><circle cx="5.2" cy="11.2" r="5" fill="#dcdcdc"/><circle cx="12.8" cy="11.2" r="5" fill="#dcdcdc"/><path d="M9 7.5L7 11.5L9 15L11 11.5Z" fill="#555"/></svg>
<svg class="ic" style="left:560px;top:410px" width="30" height="24"><path d="M7 7.5H24" stroke="#e0e0e0" stroke-width="1.2"/><path d="M13.5 8C11.5 10 10 13 9.2 16.5M16.5 8C18.5 10 20.5 13 21.8 16.5" stroke="#e0e0e0" stroke-width="1.2" fill="none"/><rect x="5" y="5.5" width="4" height="4" fill="#e0e0e0"/><rect x="13.2" y="5.7" width="3.6" height="3.6" fill="#515151" stroke="#e0e0e0" stroke-width="1.1"/><rect x="22" y="5.5" width="4" height="4" fill="#e0e0e0"/><rect x="7.3" y="16.3" width="3.5" height="3.5" fill="#515151" stroke="#e0e0e0" stroke-width="1.3"/><rect x="20.3" y="16.3" width="3.5" height="3.5" fill="#515151" stroke="#e0e0e0" stroke-width="1.3"/></svg>
</body></html>
